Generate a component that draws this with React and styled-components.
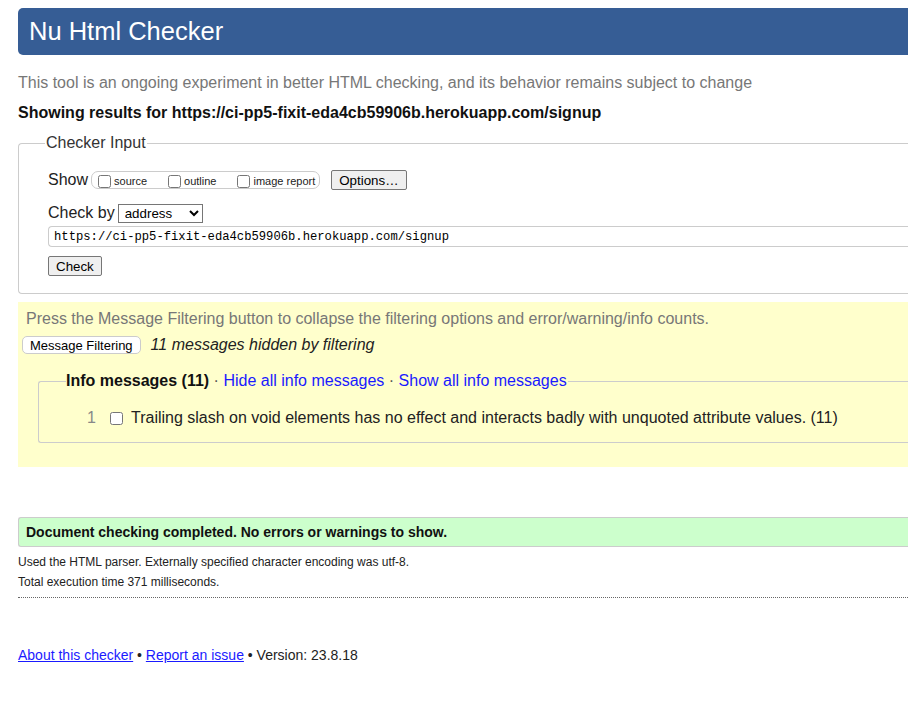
import React from "react";
import styled, { createGlobalStyle } from "styled-components";

const GlobalStyle = createGlobalStyle`
  html, body {
    margin: 0;
    padding: 0;
    background: #fff;
    overflow: hidden;
  }
  body {
    font-family: "Liberation Sans", Arial, sans-serif;
    color: #222;
  }
`;

const App = () => {
  const url = "https://ci-pp5-fixit-eda4cb59906b.herokuapp.com/signup";
  return (
    <>
      <GlobalStyle />
      <Page>
        <Inner>
          <Title>Nu Html Checker</Title>
          <Intro>
            This tool is an ongoing experiment in better HTML checking, and its behavior remains subject to change
          </Intro>
          <Results>Showing results for {url}</Results>

          <InputBox>
            <Legend>Checker Input</Legend>
            <Row>
              <RowLabel>Show</RowLabel>
              <ShowGroup>
                <Opt>
                  <Box type="checkbox" />
                  source
                </Opt>
                <Opt>
                  <Box type="checkbox" />
                  outline
                </Opt>
                <Opt>
                  <Box type="checkbox" />
                  image report
                </Opt>
              </ShowGroup>
              <Button $ml={11}>Options…</Button>
            </Row>
            <Row $mt={13}>
              <RowLabel>Check by</RowLabel>
              <Select defaultValue="address">
                <option value="address">address</option>
                <option value="file">file upload</option>
                <option value="text">text input</option>
              </Select>
            </Row>
            <UrlInput defaultValue={url} />
            <Button $mt={9} $self>Check</Button>
          </InputBox>

          <Filters>
            <FilterHint>
              Press the Message Filtering button to collapse the filtering options and error/warning/info counts.
            </FilterHint>
            <FilterRow>
              <WhiteButton>Message Filtering</WhiteButton>
              <Hidden>11 messages hidden by filtering</Hidden>
            </FilterRow>
            <InfoBox>
              <InfoLegend>
                <b>Info messages (11)</b>
                <Dot> · </Dot>
                <Action href="#">Hide all info messages</Action>
                <Dot> · </Dot>
                <Action href="#">Show all info messages</Action>
              </InfoLegend>
              <MsgRow>
                <MsgNum>1</MsgNum>
                <Box type="checkbox" />
                <MsgText>
                  Trailing slash on void elements has no effect and interacts badly with unquoted attribute values. (11)
                </MsgText>
              </MsgRow>
            </InfoBox>
          </Filters>

          <Success>Document checking completed. No errors or warnings to show.</Success>
          <Detail $mt={8}>Used the HTML parser. Externally specified character encoding was utf-8.</Detail>
          <Detail $mt={6}>Total execution time 371 milliseconds.</Detail>
          <Rule />

          <Footer>
            <FooterLink href="#">About this checker</FooterLink> •{" "}
            <FooterLink href="#">Report an issue</FooterLink> • Version: 23.8.18
          </Footer>
        </Inner>
      </Page>
    </>
  );
};

export default App;

const Page = styled.div`
  width: 908px;
  height: 706px;
  overflow: hidden;
  padding: 8px 0 0 18px;
  box-sizing: border-box;
`;
const Inner = styled.div`
  width: 920px;
  display: flex;
  flex-direction: column;
`;
const Title = styled.h1`
  margin: 0;
  height: 47px;
  line-height: 46px;
  padding-left: 11px;
  background: #365d95;
  color: #fff;
  font-size: 25.5px;
  font-weight: normal;
  border-radius: 5px 0 0 5px;
`;
const Intro = styled.p`
  margin: 19px 0 0;
  font-size: 16px;
  line-height: 18px;
  color: #777;
  white-space: nowrap;
`;
const Results = styled.p`
  margin: 12px 0 0;
  font-size: 16px;
  line-height: 18px;
  font-weight: bold;
  color: #111;
`;
const InputBox = styled.fieldset`
  margin: 12px 0 0;
  padding: 18px 0 17px 29px;
  border: 1px solid #ccc;
  border-right: none;
  border-radius: 4px 0 0 4px;
  display: flex;
  flex-direction: column;
  min-width: 0;
`;
const Legend = styled.legend`
  margin-left: -3px;
  padding: 0 1px;
  font-size: 16px;
  line-height: 18px;
  color: #333;
`;
const Row = styled.div`
  display: flex;
  align-items: center;
  height: 20px;
  margin-top: ${(p) => p.$mt || 0}px;
`;
const RowLabel = styled.span`
  font-size: 16px;
  color: #222;
  margin-right: 3px;
`;
const ShowGroup = styled.span`
  display: flex;
  align-items: center;
  height: 16px;
  padding: 0 4px 0 6px;
  border: 1px solid #ccc;
  border-radius: 7px;
  gap: 21px;
`;
const Opt = styled.label`
  display: flex;
  align-items: center;
  font-size: 11px;
  color: #222;
  padding-top: 2px;
`;
const Box = styled.input`
  width: 13px;
  height: 13px;
  margin: 0 3px 0 0;
`;
const Button = styled.button`
  font-family: "Liberation Sans", Arial, sans-serif;
  font-size: 13.33px;
  height: 20px;
  padding: 0 7px;
  margin-left: ${(p) => p.$ml || 0}px;
  margin-top: ${(p) => p.$mt || 0}px;
  align-self: ${(p) => (p.$self ? "flex-start" : "auto")};
  background: #efefef;
  border: 1px solid #767676;
  border-radius: 2px;
  color: #000;
`;
const Select = styled.select`
  font-family: "Liberation Sans", Arial, sans-serif;
  font-size: 13.33px;
  width: 85px;
  height: 19px;
  padding: 0 2px;
  border: 1px solid #767676;
  border-radius: 0;
  background: #fff;
  color: #000;
`;
const UrlInput = styled.input`
  margin-top: 3px;
  height: 21px;
  box-sizing: border-box;
  padding: 0 5px;
  font-family: "Liberation Mono", "Courier New", monospace;
  font-size: 12.2px;
  color: #000;
  border: 1px solid #ccc;
  border-right: none;
  border-radius: 4px 0 0 4px;
  outline: none;
`;
const Filters = styled.div`
  margin-top: 8px;
  background: #ffffcc;
  padding: 8px 0 24px 4px;
  display: flex;
  flex-direction: column;
`;
const FilterHint = styled.p`
  margin: 0 0 0 4px;
  font-size: 16px;
  line-height: 18px;
  color: #777;
`;
const FilterRow = styled.div`
  display: flex;
  align-items: center;
  margin-top: 8px;
  height: 18px;
`;
const WhiteButton = styled.button`
  font-family: "Liberation Sans", Arial, sans-serif;
  font-size: 13px;
  height: 18px;
  padding: 0 7px;
  background: #fff;
  border: 1px solid #ccc;
  border-radius: 5px;
  color: #000;
`;
const Hidden = styled.em`
  margin-left: 10px;
  font-size: 16px;
  color: #222;
`;
const InfoBox = styled.fieldset`
  margin: 18px 0 0 16px;
  padding: 18px 0 14px 0;
  border: 1px solid #ccc;
  border-right: none;
  border-radius: 3px 0 0 3px;
  min-width: 0;
`;
const InfoLegend = styled.legend`
  margin-left: 27px;
  padding: 0 1px 0 0;
  font-size: 16px;
  line-height: 18px;
  color: #111;
`;
const Dot = styled.span`
  color: #555;
`;
const Action = styled.a`
  color: #1a1aff;
  text-decoration: none;
`;
const MsgRow = styled.div`
  display: flex;
  align-items: center;
  height: 20px;
  font-size: 16px;
`;
const MsgNum = styled.span`
  width: 71px;
  text-align: right;
  color: #888;
  padding-right: 14px;
  box-sizing: border-box;
`;
const MsgText = styled.span`
  margin-left: 5px;
  color: #222;
  white-space: nowrap;
`;
const Success = styled.div`
  margin-top: 50px;
  height: 28px;
  line-height: 28px;
  padding-left: 7px;
  background: #ccffcc;
  border: 1px solid #ccc;
  border-right: none;
  border-radius: 3px 0 0 3px;
  font-size: 14px;
  font-weight: bold;
  color: #111;
`;
const Detail = styled.p`
  margin: ${(p) => p.$mt || 0}px 0 0;
  font-size: 12px;
  line-height: 14px;
  color: #222;
`;
const Rule = styled.hr`
  margin: 8px 0 0;
  border: none;
  border-top: 1px dotted #666;
`;
const Footer = styled.p`
  margin: 49px 0 0;
  font-size: 14px;
  line-height: 16px;
  color: #222;
`;
const FooterLink = styled.a`
  color: #1a1aff;
  text-decoration: underline;
`;
